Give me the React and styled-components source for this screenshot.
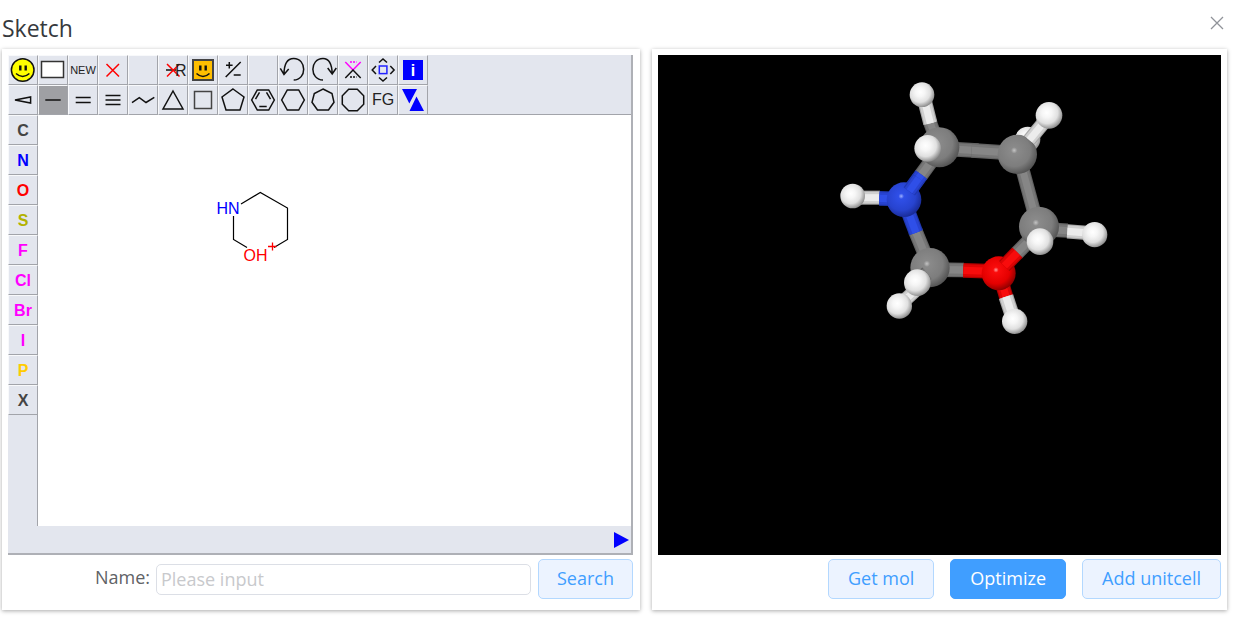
import React from "react";
import styled, { createGlobalStyle } from "styled-components";

const GlobalStyle = createGlobalStyle`
  * { box-sizing: border-box; }
  body { margin: 0; background: #fff; font-family: "Open Sans", "Noto Sans", sans-serif; }
  button, input { font-family: inherit; }
`;

const Page = styled.main`
  padding: 0 10px 8px 2px;
`;

const Header = styled.header`
  display: flex;
  justify-content: space-between;
  align-items: flex-start;
  height: 49px;
  padding-top: 12px;
`;

const Title = styled.h1`
  margin: 0;
  font-size: 23px;
  line-height: 32px;
  font-weight: 400;
  color: #36393d;
`;

const CloseButton = styled.button`
  display: flex;
  padding: 4px 3px;
  border: 0;
  background: none;
  cursor: pointer;
`;

const Columns = styled.div`
  display: grid;
  grid-template-columns: minmax(0, 638fr) minmax(0, 575fr);
  gap: 12px;
`;

const Card = styled.section`
  display: flex;
  flex-direction: column;
  padding: 6px 6px 11px;
  background: #fff;
  box-shadow: 0 1px 4px rgba(0, 0, 0, 0.34);
`;

const Editor = styled.div`
  display: flex;
  flex-direction: column;
  margin-right: 1px;
  background: #e3e6ee;
  border-right: 2px solid #aeb0b6;
  border-bottom: 2px solid #aeb0b6;
`;

const Toolbar = styled.div`
  border-bottom: 1px solid #a2a4aa;
`;

const ToolRow = styled.div`
  display: flex;
  height: ${(p) => (p.$last ? "29px" : "30px")};
`;

const Tool = styled.button`
  display: flex;
  align-items: center;
  justify-content: center;
  flex: none;
  width: 30px;
  height: 30px;
  padding: 0;
  border: 1px solid #f8f9fb;
  border-right-color: #a2a4aa;
  border-bottom-color: #a2a4aa;
  background: ${(p) => (p.$active ? "#9fa0a4" : "#e3e6ee")};
  font-family: "Liberation Sans", Arial, sans-serif;
  font-size: ${(p) => (p.$small ? "11px" : "16px")};
  color: #222;
  cursor: pointer;
  svg { flex: none; }
`;

const ElementTool = styled(Tool)`
  padding-top: 2px;
  font-weight: 700;
  color: ${(p) => p.$color};
`;

const Workspace = styled.div`
  display: flex;
`;

const Elements = styled.div`
  display: flex;
  flex-direction: column;
  width: 30px;
  border-right: 1px solid #a2a4aa;
`;

const Canvas = styled.div`
  flex: 1;
  min-height: 411px;
  background: #fff;
`;

const StatusBar = styled.div`
  display: flex;
  justify-content: flex-end;
  align-items: center;
  height: 27px;
  padding-right: 2px;
`;

const PlayButton = styled.button`
  display: flex;
  padding: 0;
  border: 0;
  background: none;
  cursor: pointer;
`;

const SearchRow = styled.form`
  display: flex;
  align-items: center;
  justify-content: flex-end;
  padding: 4px 1px 0 0;
`;

const Label = styled.label`
  margin-right: 6px;
  font-size: 18px;
  line-height: 24px;
  color: #606266;
  padding-bottom: 4px;
`;

const NameInput = styled.input`
  width: 60%;
  height: 31px;
  margin-right: 7px;
  padding: 0 4px;
  border: 1px solid #dcdfe6;
  border-radius: 5px;
  background: #fff;
  font-size: 18px;
  color: #606266;
  &::placeholder { color: #c8c9cc; opacity: 1; }
`;

const Button = styled.button`
  height: 40px;
  padding: 0 18px 2px;
  border: 1px solid ${(p) => (p.$primary ? "#409eff" : "#b3d8ff")};
  border-radius: 5px;
  background: ${(p) => (p.$primary ? "#409eff" : "#ecf3ff")};
  color: ${(p) => (p.$primary ? "#fff" : "#409eff")};
  font-size: 18px;
  white-space: nowrap;
  cursor: pointer;
`;

const ActionButton = styled(Button)`
  padding: 0 19px 2px;
`;

const Viewer = styled.div`
  height: 500px;
  background: #000;
  svg { display: block; width: 100%; height: 100%; }
`;

const Actions = styled.div`
  display: flex;
  justify-content: flex-end;
  gap: 16px;
  padding-top: 4px;
`;

const Icon = ({ children }) => (
  <svg width="30" height="30" viewBox="0 0 30 30" fill="none" stroke="#111" strokeWidth="1.5" aria-hidden="true">
    {children}
  </svg>
);

const hexagon = "9.3,5 20.7,5 26.3,15 20.7,25 9.3,25 3.7,15";

const topTools = [
  ["Smiles", <>
    <circle cx="14.7" cy="15" r="11.3" fill="#ff0" />
    <path d="M12.3 10.5v5M17.7 10.5v5" strokeWidth="2.4" />
    <path d="M8 18.5q6.7 6 13.4 0" />
  </>],
  ["Select area", <rect x="3.500" y="6.500" width="22" height="16" fill="#fff" stroke="#333" />],
  ["New", null, "NEW"],
  ["Delete", <path d="M8.500 9l12.500 12.500M21 9L8.500 21.500" stroke="red" />],
  ["Empty slot", null],
  ["Delete R group", <>
    <path d="M8 15h10" strokeWidth="2" stroke="#444" />
    <path d="M9 9l12.5 12.5M21.5 9L9 21.5" stroke="red" />
    <text x="17" y="21" fontFamily="Liberation Sans" fontSize="16" fill="#222" stroke="none">R</text>
  </>],
  ["Query", <>
    <rect x="5" y="5" width="20" height="20" fill="#ffbe00" stroke="#444" strokeWidth="2" />
    <path d="M12.3 10.5v5M17.7 10.5v5" strokeWidth="2.4" />
    <path d="M8.5 18.5q6.5 6 13 0" />
  </>],
  ["Charge", <path d="M7.7 22L22.7 7M8 10.3h6.6M11.3 7v6.6M15.7 20h7" />],
  ["Empty slot", null],
  ["Undo", <path d="M15.7 25C29 25 29 3.5 15.7 3.5C8 3.5 6 11 6 19.5M2.3 13.3L6 19.5L10.7 14" />],
  ["Redo", <path d="M15 25C1.5 25 1.5 3.5 15 3.5C22 3.5 24 11 24.2 19M19.7 13L24.2 19L28.3 13" />],
  ["Clean up", <>
    <path d="M7.3 7L15 15L22.7 7" stroke="#f0f" />
    <path d="M7.3 23L15 15L22.7 23" />
    <path d="M12 7h6.5" stroke="#f0f" strokeDasharray="2 1" />
    <path d="M12 22h6.5" strokeDasharray="2 1" />
  </>],
  ["Move", <>
    <path d="M11 7.5l4-3.5 4 3.5M11 22.5l4 3.5 4-3.5M8 11l-3.8 4L8 19M22.3 11l3.8 4-3.8 4" />
    <rect x="11.3" y="11" width="7.6" height="7.6" stroke="#22f" />
  </>],
  ["Information", <>
    <rect x="5" y="5" width="20" height="20" fill="#00f" stroke="none" />
    <text x="15" y="21" textAnchor="middle" fontFamily="Liberation Sans" fontSize="16" fontWeight="700" fill="#fff" stroke="none">i</text>
  </>],
];

const bondTools = [
  ["Stereo bond", <path d="M7 15L22.6 12v6z" />],
  ["Single bond", <path d="M7.3 15h15.4" />],
  ["Double bond", <path d="M7.7 12.5h15M7.7 17.5h15" />],
  ["Triple bond", <path d="M7.5 10.5h15M7.5 15h15M7.5 19.5h15" />],
  ["Chain", <path d="M4 17.7L11.3 12.7L18 17.5L26.3 12.3" />],
  ["Triangle ring", <path d="M15 6L25 24H5z" />],
  ["Square ring", <rect x="6.5" y="6.5" width="17" height="17" stroke="#444" />],
  ["Pentagon ring", <polygon points="15,4 26,12 22,25 8,25 4,12" />],
  ["Benzene ring", <>
    <polygon points={hexagon} />
    <path d="M7.5 14.2l4-6.8M22.5 14.2l-4-6.8M11.3 21.5h7.4" />
  </>],
  ["Hexagon ring", <polygon points={hexagon} />],
  ["Heptagon ring", <polygon points="15,4 24,8.5 26,17.3 20.5,25 9.5,25 4,17.3 6.3,8.5" />],
  ["Octagon ring", <polygon points="10.7,4.3 19.3,4.3 25.7,10.7 25.7,19.3 19.3,25.7 10.7,25.7 4.3,19.3 4.3,10.7" />],
  ["Functional group", null, "FG"],
  ["Transfer", <path d="M4 4h15l-7.7 14.5zM18.5 11.5L26 26H11.5z" fill="#00f" stroke="none" />],
];

const elements = [
  ["C", "#444"], ["N", "#00f"], ["O", "#f00"], ["S", "#b2b200"], ["F", "#f0f"],
  ["Cl", "#f0f"], ["Br", "#f0f"], ["I", "#f0f"], ["P", "#fc0"], ["X", "#444"],
];

const ToolButtons = ({ tools, last }) => (
  <ToolRow $last={last}>
    {tools.map(([name, art, text], i) => (
      <Tool key={i} type="button" aria-label={name} $active={name === "Single bond"} $small={text === "NEW"}>
        {art ? <Icon>{art}</Icon> : text}
      </Tool>
    ))}
  </ToolRow>
);

const FlatMolecule = () => (
  <svg width="300" height="200" viewBox="38 115 300 200" fontFamily="Liberation Sans" fontSize="16" role="img" aria-label="Structure diagram">
    <path
      d="M241 204L260.3 192.5L287.5 208V239.5L274 247.5M233.5 216V239.5L247 247.5"
      fill="none" stroke="#000" strokeWidth="1.2"
    />
    <text x="216.500" y="214" fill="#00f">HN</text>
    <text x="243.500" y="261" fill="#f00">OH</text>
    <path d="M268 246.5h8.5M272.5 242.5v8" stroke="#f00" strokeWidth="1.3" />
  </svg>
);

const tones = {
  C: ["#626262", "#767676", "#868686"],
  H: ["#a8a8a8", "#cfcfcf", "#ececec"],
  N: ["#1f38b0", "#2843d0", "#2f4fe8"],
  O: ["#b00000", "#dc0404", "#f80c0c"],
};

const Bond = ({ el, from, to, w = 44 }) => (
  <g>
    {[1, 0.84, 0.5].map((k, i) => (
      <line key={i} x1={from[0]} y1={from[1]} x2={to[0]} y2={to[1]} stroke={tones[el][i]} strokeWidth={w * k} />
    ))}
  </g>
);

const Atom = ({ el, at, r }) => <circle cx={at[0]} cy={at[1]} r={r} fill={`url(#atom${el})`} />;

const gradients = {
  C: ["#c4c4c4", "#8a8a8a", "#7d7d7d", "#525252"],
  H: ["#ffffff", "#f6f6f6", "#e0e0e0", "#8a8a8a"],
  N: ["#9eb0ff", "#2f4fe8", "#2743cf", "#182a94"],
  O: ["#ff9c9c", "#fa0c0c", "#e40000", "#8c0000"],
};

const BallAndStick = () => (
  <svg viewBox="-531 -45 1689 1500" role="img" aria-label="Three-dimensional model">
    <defs>
      {Object.entries(gradients).map(([el, stops]) => (
        <radialGradient key={el} id={`atom${el}`} cx="0.42" cy="0.4" r="0.62">
          <stop offset="0" stopColor={stops[0]} />
          <stop offset={el === "H" ? "0.3" : "0.13"} stopColor={stops[1]} />
          <stop offset="0.66" stopColor={stops[2]} />
          <stop offset="1" stopColor={stops[3]} />
        </radialGradient>
      ))}
    </defs>
    <Bond el="C" from={[313, 235]} to={[430, 242]} />
    <Bond el="C" from={[410, 241]} to={[547, 250]} />
    <Atom el="H" at={[578, 208]} r={38} />
    <Bond el="C" from={[555, 270]} to={[605, 455]} w={42} />
    <Bond el="C" from={[313, 232]} to={[284, 154]} w={42} />
    <Bond el="H" from={[286, 160]} to={[267, 85]} w={43} />
    <Atom el="H" at={[261, 74]} r={37} />
    <Bond el="C" from={[313, 240]} to={[257, 317]} w={44} />
    <Bond el="N" from={[259, 314]} to={[212, 378]} w={44} />
    <Bond el="H" from={[60, 383]} to={[135, 383]} w={42} />
    <Bond el="N" from={[133, 385]} to={[200, 387]} w={44} />
    <Atom el="H" at={[53, 378]} r={37} />
    <Bond el="C" from={[282, 582]} to={[241, 483]} w={44} />
    <Bond el="N" from={[243, 488]} to={[210, 400]} w={44} />
    <Atom el="N" at={[207, 389]} r={52} />
    <Bond el="N" from={[223, 364]} to={[251, 325]} w={42} />
    <Atom el="C" at={[313, 232]} r={60} />
    <Atom el="H" at={[278, 235]} r={40} />
    <Bond el="C" from={[612, 477]} to={[698, 482]} w={43} />
    <Bond el="H" from={[697, 484]} to={[775, 490]} w={43} />
    <Atom el="H" at={[779, 494]} r={38} />
    <Bond el="C" from={[607, 487]} to={[545, 550]} w={44} />
    <Bond el="C" from={[297, 599]} to={[387, 600]} w={44} />
    <Bond el="O" from={[385, 601]} to={[478, 604]} w={44} />
    <Bond el="O" from={[492, 610]} to={[514, 682]} w={43} />
    <Bond el="H" from={[513, 680]} to={[533, 741]} w={45} />
    <Atom el="H" at={[539, 754]} r={38} />
    <Atom el="O" at={[491, 610]} r={51} />
    <Bond el="O" from={[508, 588]} to={[547, 548]} w={44} />
    <Atom el="C" at={[612, 470]} r={60} />
    <Atom el="H" at={[615, 515]} r={40} />
    <Atom el="C" at={[547, 253]} r={59} />
    <Bond el="H" from={[583, 210]} to={[630, 153]} w={42} />
    <Atom el="H" at={[642, 136]} r={40} />
    <Atom el="C" at={[285, 593]} r={59} />
    <Bond el="C" from={[276, 610]} to={[257, 625]} w={44} />
    <Bond el="H" from={[248, 655]} to={[202, 697]} w={42} />
    <Atom el="H" at={[193, 708]} r={38} />
    <Atom el="H" at={[247, 638]} r={40} />
  </svg>
);

export default function App() {
  return (
    <>
      <GlobalStyle />
      <Page>
        <Header>
          <Title>Sketch</Title>
          <CloseButton type="button" aria-label="Close">
            <svg width="14" height="14" viewBox="0 0 14 14" stroke="#909399" strokeWidth="1.3">
              <path d="M1 1l12 12M13 1L1 13" />
            </svg>
          </CloseButton>
        </Header>
        <Columns>
          <Card>
            <Editor>
              <Toolbar>
                <ToolButtons tools={topTools} />
                <ToolButtons tools={bondTools} last />
              </Toolbar>
              <Workspace>
                <Elements>
                  {elements.map(([symbol, color]) => (
                    <ElementTool key={symbol} type="button" $color={color}>{symbol}</ElementTool>
                  ))}
                </Elements>
                <Canvas>
                  <FlatMolecule />
                </Canvas>
              </Workspace>
              <StatusBar>
                <PlayButton type="button" aria-label="Next">
                  <svg width="15" height="16" viewBox="0 0 15 16"><path d="M0 0L15 8L0 16z" fill="#00f" /></svg>
                </PlayButton>
              </StatusBar>
            </Editor>
            <SearchRow onSubmit={(e) => e.preventDefault()}>
              <Label htmlFor="compound-name">Name:</Label>
              <NameInput id="compound-name" placeholder="Please input" />
              <Button type="submit">Search</Button>
            </SearchRow>
          </Card>
          <Card>
            <Viewer>
              <BallAndStick />
            </Viewer>
            <Actions>
              <ActionButton type="button">Get mol</ActionButton>
              <ActionButton type="button" $primary>Optimize</ActionButton>
              <ActionButton type="button">Add unitcell</ActionButton>
            </Actions>
          </Card>
        </Columns>
      </Page>
    </>
  );
}
